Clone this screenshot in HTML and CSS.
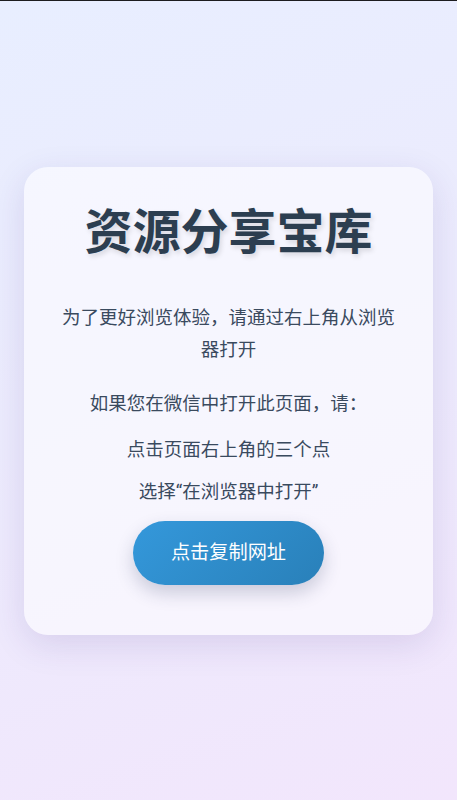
FILE: index.html
```html
<!DOCTYPE html>
<html lang="zh-CN">
<head>
<meta charset="utf-8">
<meta name="viewport" content="width=device-width, initial-scale=1">
<title>资源分享宝库</title>
<link rel="stylesheet" href="styles.css">
</head>
<body>
<main class="page">
  <section class="card">
    <h1 class="title">资源分享宝库</h1>
    <p class="lead">为了更好浏览体验，请通过右上角从浏览器打开</p>
    <p class="hint">如果您在微信中打开此页面，请：</p>
    <p class="step step-first">点击页面右上角的三个点</p>
    <p class="step">选择“在浏览器中打开”</p>
    <button class="copy-btn" type="button">点击复制网址</button>
  </section>
</main>
</body>
</html>
```
FILE: styles.css
```css
* { box-sizing: border-box; }
html, body { margin: 0; padding: 0; }
html { border-top: 1px solid #1c1c1f; }
body {
  font-family: Roboto, "Noto Sans CJK SC", sans-serif;
  background: linear-gradient(160deg, #e8eeff 0%, #ecebfd 45%, #f2e6fc 100%);
  min-height: 799px;
}
.page {
  min-height: 799px;
  display: flex;
  align-items: center;
  justify-content: center;
  padding: 0 24px;
}
.card {
  width: 100%;
  background: rgba(255, 255, 255, 0.55);
  border-radius: 24px;
  box-shadow: 0 10px 34px rgba(60, 40, 130, 0.13);
  padding: 36px 34px 50px;
  text-align: center;
  display: flex;
  flex-direction: column;
  align-items: center;
}
.title {
  margin: 0 0 39px;
  font-size: 48px;
  line-height: 60px;
  font-weight: 700;
  color: #2c3e50;
  text-shadow: 2px 3px 5px rgba(0, 0, 0, 0.12);
}
.lead, .hint, .step {
  margin: 0;
  font-size: 18.5px;
  line-height: 32px;
  color: #3a4a5e;
}
.lead { margin-bottom: 22px; }
.hint { margin-bottom: 14px; }
.step-first { margin-bottom: 10px; }
.copy-btn {
  margin-top: 13px;
  border: none;
  border-radius: 32px;
  padding: 18px 38px;
  font-family: inherit;
  font-size: 19.2px;
  line-height: 28px;
  color: #ffffff;
  background: linear-gradient(135deg, #3498db 0%, #2980b9 100%);
  box-shadow: 0 8px 18px rgba(40, 50, 90, 0.22);
}
```
